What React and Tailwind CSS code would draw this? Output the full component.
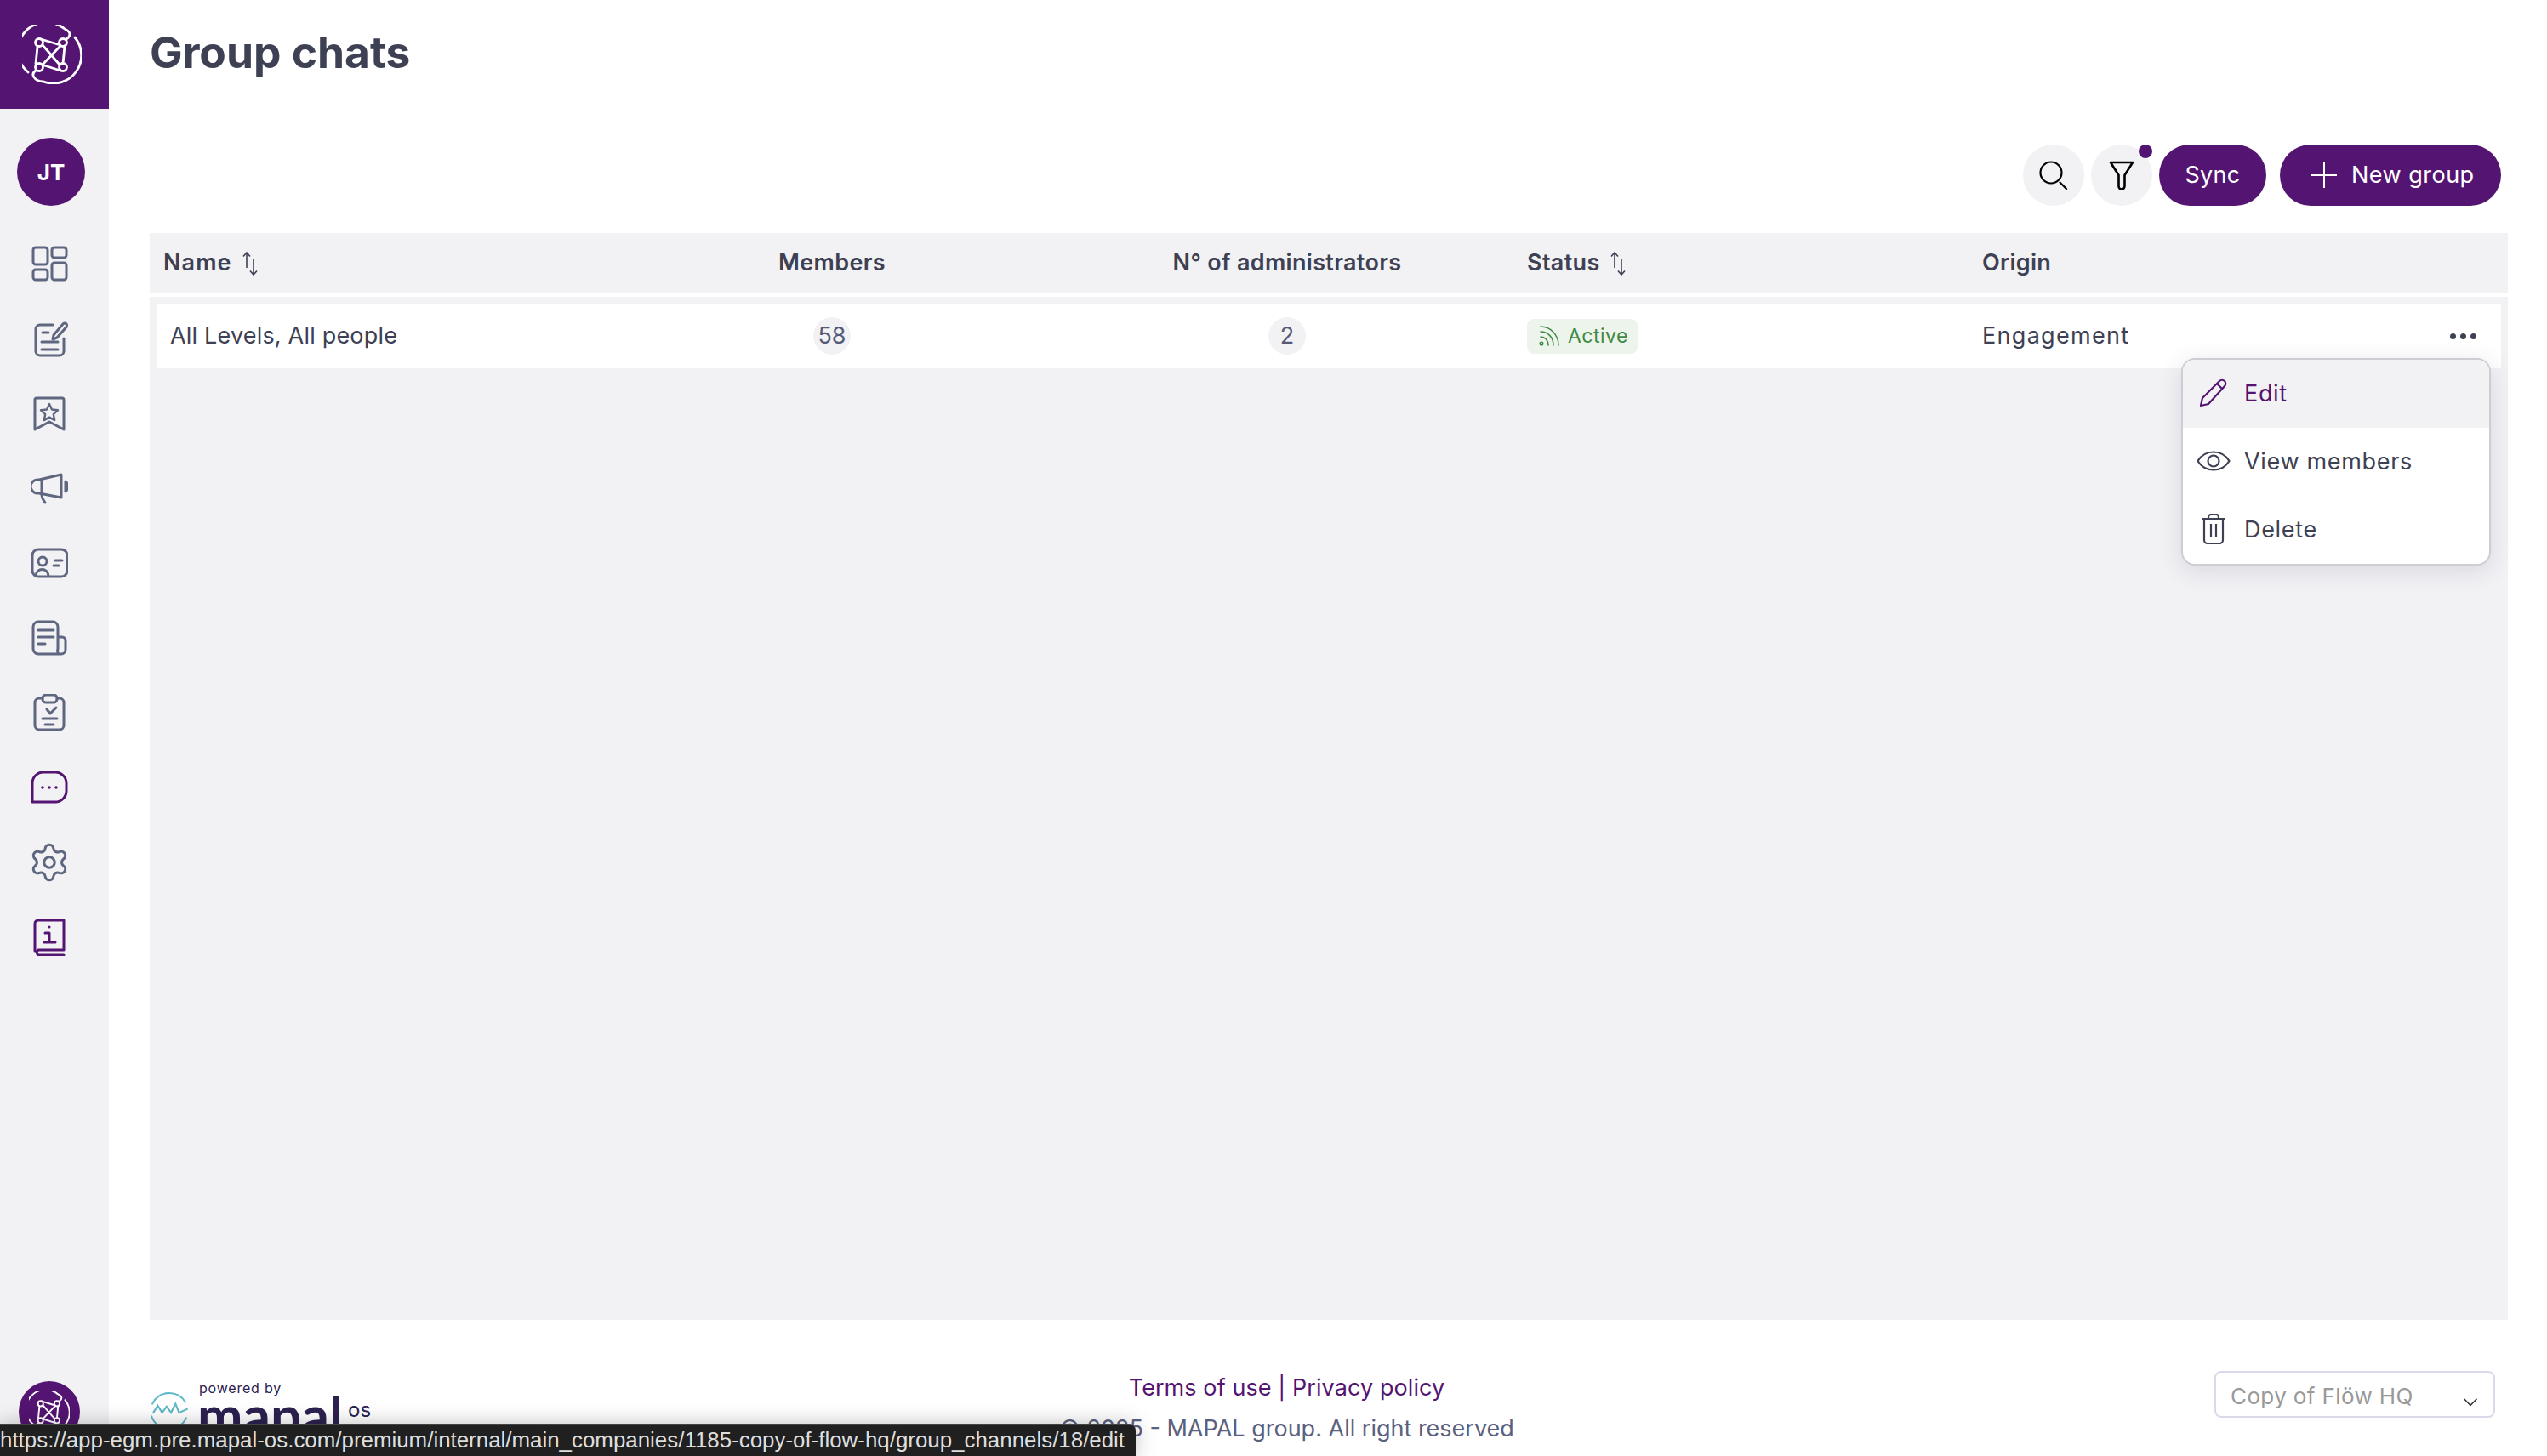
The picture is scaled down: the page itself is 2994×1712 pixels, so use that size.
import { Settings } from 'lucide-react';

const NavIcon = ({ children, className = 'text-[#5f6680]' }) => (
  <div className="flex h-[88px] w-full items-center justify-center">
    <svg viewBox="0 0 44 44" fill="none" stroke="currentColor" strokeWidth="3" strokeLinecap="round" strokeLinejoin="round" className={`h-11 w-11 ${className}`}>
      {children}
    </svg>
  </div>
);

const BrandMark = ({ className }) => (
  <svg viewBox="0 0 70 70" fill="none" stroke="white" strokeWidth="2.8" strokeLinecap="round" strokeLinejoin="round" className={className}>
    <path d="M7 56 A33 33 0 0 1 50 5 C57 8 58 13 52 17" />
    <path d="M62 15 A33 33 0 0 1 25 67 C13 66 10 58 16 54" />
    <path d="M22 17 L45 24 M23 47 L45 54 M18 26 L16 46 M50 25 L48 46 M24 24 L44 47 M45 25 L24 47" />
    <circle cx="20" cy="21" r="4.5" />
    <circle cx="48" cy="21" r="4.5" />
    <circle cx="20" cy="50" r="4.5" />
    <circle cx="48" cy="50" r="4.5" />
  </svg>
);

const SortIcon = () => (
  <svg viewBox="0 0 20 28" fill="none" stroke="#3e4154" strokeWidth="1.6" className="h-[28px] w-[20px]">
    <path d="M6 19 V1 M2 5.5 L6 1 L10 5.5 M14 9 V27 M10 22.5 L14 27 L18 22.5" />
  </svg>
);

const Sidebar = () => (
  <aside className="flex h-full w-[128px] shrink-0 flex-col bg-[#f2f2f5]">
    <div className="flex h-[128px] items-center justify-center bg-[#541472] pr-[14px] pl-[8px]">
      <BrandMark className="h-[70px] w-[70px]" />
    </div>
    <div className="mt-[34px] mb-[24px] ml-[20px] flex h-[80px] w-[80px] items-center justify-center self-start rounded-full bg-[#541472] text-[26px] font-bold text-white">
      JT
    </div>
    <nav className="w-[116px]">
      <NavIcon>
        <rect x="3" y="3" width="17" height="20" rx="3" />
        <rect x="3" y="29" width="17" height="12" rx="3" />
        <rect x="25" y="3" width="17" height="12" rx="3" />
        <rect x="25" y="21" width="17" height="20" rx="3" />
      </NavIcon>
      <NavIcon>
        <path d="M26 6 H11 a5 5 0 0 0 -5 5 v26 a5 5 0 0 0 5 5 h23 a5 5 0 0 0 5 -5 V22" />
        <path d="M14 15 h7 M13 26 h19 M13 35 h19" />
        <path d="M26 23 l1 -5 L38 5 a2.5 2.5 0 0 1 4 3.5 L31 21 Z" />
      </NavIcon>
      <NavIcon>
        <path d="M7 4 H37 a2 2 0 0 1 2 2 V41 L22 32 L5 41 V6 a2 2 0 0 1 2 -2 Z" />
        <path strokeWidth="2.4" d="M22 11 l3 6.5 7 .8 -5.2 4.8 1.4 7 -6.2 -3.5 -6.2 3.5 1.4 -7 -5.2 -4.8 7 -.8 Z" />
      </NavIcon>
      <NavIcon>
        <path d="M36 6 L10 12 H8 a6 6 0 0 0 0 16 H10 L36 33 Z" />
        <path d="M13 12 V30 C13 34 15 36 17 39" />
        <path d="M41 14 C44 16 44 24 41 26 Z" fill="currentColor" />
      </NavIcon>
      <NavIcon>
        <rect x="2" y="6" width="41" height="32" rx="7" />
        <circle cx="14" cy="20" r="5" />
        <path d="M6 37 C7 27 20 27 21 37" />
        <path d="M29 19 H37 M27 25 H33" />
      </NavIcon>
      <NavIcon>
        <path d="M33 41 H9 a6 6 0 0 1 -6 -6 V9 a6 6 0 0 1 6 -6 H26 a6 6 0 0 1 6 6 V35 a6 6 0 0 0 1 6 H36 a5 5 0 0 0 5 -5 V25 a4 4 0 0 0 -4 -4 H32" />
        <path d="M9 13 H27 M9 21 H27 M9 29 H17" />
      </NavIcon>
      <NavIcon>
        <path d="M14 5 H10 a5 5 0 0 0 -5 5 V37 a5 5 0 0 0 5 5 H34 a5 5 0 0 0 5 -5 V10 a5 5 0 0 0 -5 -5 H31" />
        <rect x="14" y="1" width="17" height="9" rx="4" />
        <path d="M19 18 L23 23 L30 16 M14 29 H31 M17 36 H27" />
      </NavIcon>
      <NavIcon className="text-[#541472]">
        <path d="M2 39 V17 a13 13 0 0 1 13 -13 H29 a13 13 0 0 1 13 13 V26 a13 13 0 0 1 -13 13 Z" />
        <path strokeWidth="3.6" d="M14 22 h.01 M22 22 h.01 M30 22 h.01" />
      </NavIcon>
      <div className="flex h-[88px] w-full items-center justify-center">
        <Settings className="h-[50px] w-[50px] text-[#5f6680]" strokeWidth={1.45} />
      </div>
      <NavIcon className="text-[#541472]">
        <path d="M5 38 V6 a4 4 0 0 1 4 -4 H39 V37 H9 a3.5 3.5 0 0 0 0 6 H39" />
        <path strokeWidth="3" d="M22 10 h.01 M17 17 H22 V28 M16 28 H29" />
      </NavIcon>
    </nav>
    <div className="mt-auto mb-4 ml-[22px] flex h-[72px] w-[72px] items-center justify-center rounded-full bg-[#541472]">
      <BrandMark className="h-[48px] w-[48px]" />
    </div>
  </aside>
);

const headCols = 'grid grid-cols-[533px_506px_564px_535px_1fr] items-center';
const rowCols = 'grid grid-cols-[525px_506px_564px_535px_1fr] items-center';

const Table = () => (
  <div className="relative flex-1 bg-[#f2f2f5]">
    <div className={`${headCols} h-[71px] pl-4 text-[27px] font-semibold tracking-[0.012em] text-[#3e4154]`}>
      <div className="flex items-center gap-[11px] tracking-[0.04em]">Name <SortIcon /></div>
      <div className="text-center">Members</div>
      <div className="text-center">N° of administrators</div>
      <div className="flex items-center gap-[11px]">Status <SortIcon /></div>
      <div>Origin</div>
    </div>
    <div className="h-1 bg-white" />
    <div className={`${rowCols} relative mx-2 mt-2 h-[76px] bg-white pl-4 text-[27px] text-[#3e4154]`}>
      <div className="tracking-[0.007em]">All Levels, All people</div>
      <div className="flex justify-center">
        <span className="flex h-11 w-11 items-center justify-center rounded-full bg-[#f2f2f5] text-[#545a78]">58</span>
      </div>
      <div className="flex justify-center">
        <span className="flex h-11 w-11 items-center justify-center rounded-full bg-[#f2f2f5] text-[#545a78]">2</span>
      </div>
      <div className="flex">
        <span className="flex h-[41px] w-[130px] items-center gap-[10px] rounded-lg bg-[#edf4ec] pl-[14px] text-[23px] tracking-[0.02em] text-[#3f8a45]">
          <svg viewBox="0 0 24 24" fill="none" stroke="currentColor" strokeWidth="1.5" strokeLinecap="round" className="h-6 w-6">
            <circle cx="3" cy="21" r="1.8" />
            <path d="M2 13 C7 13 11 17 11 23 M2 7 C11 7 17 14 17 23 M2 1 C14 1 23 11 23 23" />
          </svg>
          Active
        </span>
      </div>
      <div className="tracking-[0.048em]">Engagement</div>
      <div className="absolute top-[35px] right-[29px] flex gap-[5px]">
        <span className="h-[7px] w-[7px] rounded-full bg-[#3e4154]" />
        <span className="h-[7px] w-[7px] rounded-full bg-[#3e4154]" />
        <span className="h-[7px] w-[7px] rounded-full bg-[#3e4154]" />
      </div>
    </div>
    <div className="absolute top-[147px] right-[20px] w-[364px] overflow-hidden rounded-[16px] border-2 border-[#cdcdd4] bg-white text-[27px] tracking-[0.025em] text-[#3e4154] shadow-[0_6px_28px_rgba(50,50,90,0.14)]">
      <div className="flex h-[80px] items-center bg-[#f2f2f5] pl-[72px] text-[#541472]">
        <svg viewBox="0 0 34 34" fill="none" stroke="currentColor" strokeWidth="2.2" strokeLinejoin="round" className="absolute top-[22px] left-[19px] h-[34px] w-[34px]">
          <path d="M2 32 L4 23 L24 3 a3.5 3.5 0 0 1 6 6 L11 30 Z M21 6 L27 12" />
        </svg>
        Edit
      </div>
      <div className="flex h-[80px] items-center pl-[72px]">
        <svg viewBox="0 0 40 26" fill="none" stroke="currentColor" strokeWidth="2.2" className="absolute top-[106px] left-[16px] h-[26px] w-[40px]">
          <path d="M1.5 13 C10 -1 30 -1 38.5 13 C30 27 10 27 1.5 13 Z" />
          <circle cx="20" cy="13" r="6.5" />
        </svg>
        View members
      </div>
      <div className="flex h-[80px] items-center pl-[72px]">
        <svg viewBox="0 0 30 36" fill="none" stroke="currentColor" strokeWidth="2.2" strokeLinejoin="round" className="absolute top-[181px] left-[21px] h-[36px] w-[30px]">
          <path d="M1 6 H29 M4 6 V31 a4 4 0 0 0 4 4 H22 a4 4 0 0 0 4 -4 V6 M9 6 V4 a3 3 0 0 1 3 -3 H18 a3 3 0 0 1 3 3 V6 M12 12 V28 M18 12 V28" />
        </svg>
        Delete
      </div>
    </div>
  </div>
);

const Footer = () => (
  <footer className="flex h-[160px] shrink-0 justify-between pr-[15px]">
    <div className="relative w-[246px]">
      <svg viewBox="0 0 44 44" fill="none" stroke="#5db8c9" strokeWidth="2" strokeLinecap="round" className="absolute top-[84px] left-0 h-[46px] w-[46px]">
        <path d="M40 12 A21 21 0 0 0 3 14 M2 28 A21 21 0 0 0 41 30" />
        <path d="M4 24 L9 16 L14 24 L19 17 L24 24 L29 14 L33 24 L42 20" />
      </svg>
      <div className="absolute top-[72px] left-[58px] text-[16px] leading-[16px] tracking-[0.05em] text-[#2d2150]">powered by</div>
      <div className="absolute top-[92px] left-[56px] text-[64px] leading-[40px] font-bold text-[#2d2150]" style={{ fontFamily: 'Lato, sans-serif' }}>mapal</div>
      <div className="absolute top-[92px] left-[233px] text-[24px] leading-[28px] text-[#2d2150]">os</div>
    </div>
    <div className="pt-[64px] text-center text-[27px]">
      <div className="leading-[32px] tracking-[0.003em] text-[#541472]">Terms of use | Privacy policy</div>
      <div className="mt-4 leading-[32px] text-[#5a6180]">© 2025 - MAPAL group. All right reserved</div>
    </div>
    <div className="mt-[60px] flex h-[55px] w-[330px] items-start justify-between rounded-lg border-2 border-[#dcdaea] pt-[12px] pr-[18px] pl-[17px] text-[26px] leading-[32px] tracking-[0.015em] text-[#999]">
      Copy of Flöw HQ
      <svg viewBox="0 0 20 12" fill="none" stroke="#333" strokeWidth="1.8" className="mt-[18px] h-[10px] w-[18px]">
        <path d="M1 1 L10 10 L19 1" />
      </svg>
    </div>
  </footer>
);

export default function App() {
  return (
    <div className="relative flex h-screen w-full overflow-hidden bg-white" style={{ fontFamily: 'Inter, "Noto Sans", sans-serif' }}>
      <Sidebar />
      <main className="flex min-w-0 flex-1 flex-col pr-[46px] pl-[48px]">
        <h1 className="flex h-[122px] shrink-0 items-center pt-[2px] text-[51.5px] font-bold text-[#3e4154]">Group chats</h1>
        <div className="mt-[48px] mb-[32px] flex h-[72px] shrink-0 items-center justify-end gap-2 pr-[8px]">
          <button className="flex h-[72px] w-[72px] items-center justify-center rounded-full bg-[#f2f2f5]">
            <svg viewBox="0 0 34 34" fill="none" stroke="black" strokeWidth="2.2" strokeLinecap="round" className="h-[34px] w-[34px]">
              <circle cx="14" cy="14" r="12.5" />
              <path d="M24.5 25.5 L32 33" />
            </svg>
          </button>
          <button className="relative flex h-[72px] w-[72px] items-center justify-center rounded-full bg-[#f2f2f5]">
            <svg viewBox="0 0 30 34" fill="none" stroke="black" strokeWidth="2.6" strokeLinejoin="round" className="h-[34px] w-[30px]">
              <path d="M2 2 H28 L18.5 17 V30 a3.5 3.5 0 0 1 -7 0 V17 Z" />
            </svg>
            <span className="absolute top-0 right-0 h-4 w-4 rounded-full bg-[#541472]" />
          </button>
          <button className="flex h-[72px] w-[126px] items-center justify-center rounded-full bg-[#541472] text-[27px] tracking-[0.01em] text-white">Sync</button>
          <button className="ml-2 flex h-[72px] w-[260px] items-center justify-start gap-[17px] rounded-full bg-[#541472] pl-[37px] text-[27px] tracking-[0.018em] text-white">
            <svg viewBox="0 0 30 30" fill="none" stroke="white" strokeWidth="2" className="h-[30px] w-[30px]">
              <path d="M15 0 V30 M0 15 H30" />
            </svg>
            New group
          </button>
        </div>
        <Table />
        <Footer />
      </main>
      <div className="absolute bottom-0 left-0 flex h-[38px] w-[1335px] items-center overflow-hidden rounded-tr-lg border-t border-[#444] bg-[#202020] text-[25.9px] whitespace-nowrap text-[#dedede] shadow-[0_0_24px_rgba(0,0,0,0.25)]" style={{ fontFamily: '"Liberation Sans", Arial, sans-serif' }}>
        https://app-egm.pre.mapal-os.com/premium/internal/main_companies/1185-copy-of-flow-hq/group_channels/18/edit
      </div>
    </div>
  );
}
